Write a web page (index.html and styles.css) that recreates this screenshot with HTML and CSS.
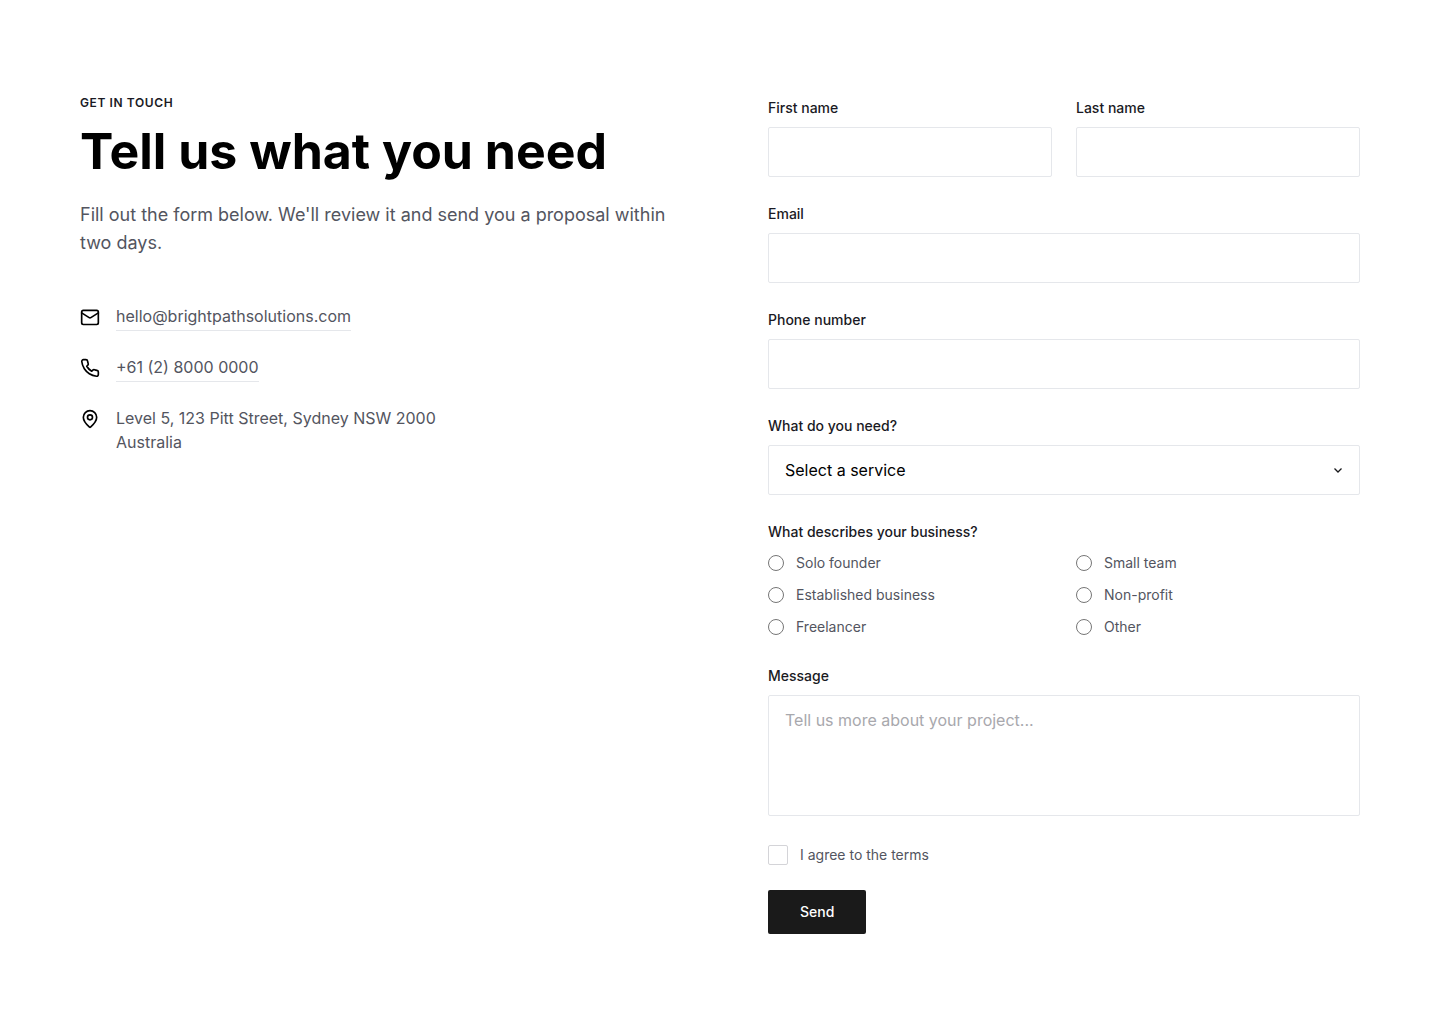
FILE: index.html
```html
<!DOCTYPE html>
<html lang="en">
<head>
    <meta charset="UTF-8">
    <meta name="viewport" content="width=device-width, initial-scale=1.0">
    <title>Contact</title>
    <link rel="stylesheet" href="styles.css">
</head>
<body>

<section class="contact">
    <div class="contact-info">
        <p class="contact-eyebrow">GET IN TOUCH</p>
        <h1 class="contact-title">Tell us what you need</h1>
        <p class="contact-lead">Fill out the form below. We'll review it and send you a proposal within two days.</p>
        <ul class="contact-list">
            <li class="contact-item">
                <svg class="contact-icon" viewBox="0 0 24 24" aria-hidden="true">
                    <rect x="2" y="4" width="20" height="17" rx="2"/>
                    <path d="m22 7-8.97 5.7a1.94 1.94 0 0 1-2.06 0L2 7"/>
                </svg>
                <a class="contact-link" href="mailto:hello@brightpathsolutions.com">hello@brightpathsolutions.com</a>
            </li>
            <li class="contact-item">
                <svg class="contact-icon" viewBox="0 0 24 24" aria-hidden="true">
                    <path d="M22 16.92v3a2 2 0 0 1-2.18 2 19.79 19.79 0 0 1-8.63-3.07 19.5 19.5 0 0 1-6-6 19.79 19.79 0 0 1-3.07-8.67A2 2 0 0 1 4.11 2h3a2 2 0 0 1 2 1.72 12.84 12.84 0 0 0 .7 2.81 2 2 0 0 1-.45 2.11L8.09 9.91a16 16 0 0 0 6 6l1.27-1.27a2 2 0 0 1 2.11-.45 12.84 12.84 0 0 0 2.81.7A2 2 0 0 1 22 16.92z"/>
                </svg>
                <a class="contact-link" href="tel:+61280000000">+61 (2) 8000 0000</a>
            </li>
            <li class="contact-item">
                <svg class="contact-icon" viewBox="0 0 24 24" aria-hidden="true">
                    <path d="M20 10c0 4.99-5.54 10.19-7.4 11.8a1 1 0 0 1-1.2 0C9.54 20.19 4 14.99 4 10a8 8 0 0 1 16 0z"/>
                    <circle cx="12" cy="10" r="3"/>
                </svg>
                <address class="contact-address">Level 5, 123 Pitt Street, Sydney NSW 2000<br>Australia</address>
            </li>
        </ul>
    </div>

    <form class="contact-form">
        <div class="form-row">
            <div class="field">
                <label class="field-label" for="first-name">First name</label>
                <input class="field-input" type="text" id="first-name" name="first-name">
            </div>
            <div class="field">
                <label class="field-label" for="last-name">Last name</label>
                <input class="field-input" type="text" id="last-name" name="last-name">
            </div>
        </div>
        <div class="field">
            <label class="field-label" for="email">Email</label>
            <input class="field-input" type="email" id="email" name="email">
        </div>
        <div class="field">
            <label class="field-label" for="phone">Phone number</label>
            <input class="field-input" type="tel" id="phone" name="phone">
        </div>
        <div class="field">
            <label class="field-label" for="service">What do you need?</label>
            <div class="select-wrap">
                <select class="field-input field-select" id="service" name="service">
                    <option value="">Select a service</option>
                </select>
                <svg class="select-arrow" viewBox="0 0 16 16" aria-hidden="true">
                    <path d="m4.5 6.5 3.5 3.5 3.5-3.5"/>
                </svg>
            </div>
        </div>
        <fieldset class="field-group">
            <legend class="field-label">What describes your business?</legend>
            <div class="radio-grid">
                <label class="radio"><input class="radio-input" type="radio" name="business" value="solo">Solo founder</label>
                <label class="radio"><input class="radio-input" type="radio" name="business" value="team">Small team</label>
                <label class="radio"><input class="radio-input" type="radio" name="business" value="established">Established business</label>
                <label class="radio"><input class="radio-input" type="radio" name="business" value="nonprofit">Non-profit</label>
                <label class="radio"><input class="radio-input" type="radio" name="business" value="freelancer">Freelancer</label>
                <label class="radio"><input class="radio-input" type="radio" name="business" value="other">Other</label>
            </div>
        </fieldset>
        <div class="field">
            <label class="field-label" for="message">Message</label>
            <textarea class="field-input field-textarea" id="message" name="message" placeholder="Tell us more about your project..."></textarea>
        </div>
        <label class="terms"><input class="terms-input" type="checkbox" name="terms">I agree to the terms</label>
        <button class="send-button" type="submit">Send</button>
    </form>
</section>

</body>
</html>
```
FILE: styles.css
```css
* {
    box-sizing: border-box;
}
body {
    margin: 0;
    font-family: Inter, "Liberation Sans", sans-serif;
    font-size: 16px;
    line-height: 24px;
    color: #535560;
    background-color: #fff;
}
.contact {
    display: grid;
    grid-template-columns: 1fr 1fr;
    gap: 96px;
    max-width: 1440px;
    padding: 96px 80px;
}
.contact-eyebrow {
    margin: 0;
    font-size: 12px;
    font-weight: 600;
    line-height: 14px;
    letter-spacing: 0.05em;
    color: #1a1a24;
}
.contact-title {
    margin: 11px 0 20px;
    font-size: 50px;
    font-weight: 700;
    line-height: 60px;
    color: #000;
}
.contact-lead {
    margin: 0;
    font-size: 18px;
    line-height: 28px;
}
.contact-list {
    display: flex;
    flex-direction: column;
    gap: 24px;
    margin: 47px 0 0;
    padding: 0;
    list-style: none;
}
.contact-item {
    display: flex;
    align-items: flex-start;
    gap: 16px;
}
.contact-icon {
    flex: none;
    width: 20px;
    height: 20px;
    margin-top: 3px;
    fill: none;
    stroke: #000;
    stroke-width: 2;
    stroke-linecap: round;
    stroke-linejoin: round;
}
.contact-link {
    padding-bottom: 2px;
    border-bottom: 1px solid #e5e7eb;
    color: inherit;
    text-decoration: none;
}
.contact-address {
    font-style: normal;
}
.contact-form {
    display: flex;
    flex-direction: column;
    gap: 25px;
}
.form-row {
    display: grid;
    grid-template-columns: 1fr 1fr;
    gap: 24px;
}
.field-label {
    display: block;
    margin-bottom: 8px;
    padding: 0;
    font-size: 14px;
    font-weight: 500;
    line-height: 23px;
    color: #1a1a24;
}
.field-input {
    display: block;
    width: 100%;
    height: 50px;
    padding: 0 16px;
    border: 1px solid #e5e7eb;
    border-radius: 2px;
    background-color: #fff;
    font: inherit;
    color: #000;
}
.select-wrap {
    position: relative;
}
.field-select {
    appearance: none;
}
.select-arrow {
    position: absolute;
    top: 17px;
    right: 14px;
    width: 16px;
    height: 16px;
    fill: none;
    stroke: #18181b;
    stroke-width: 1.3;
    pointer-events: none;
}
.field-group {
    margin: 0;
    padding: 0;
    border: none;
}
.radio-grid {
    display: grid;
    grid-template-columns: 1fr 1fr;
    gap: 8px 24px;
}
.radio {
    display: flex;
    align-items: center;
    gap: 12px;
    font-size: 14px;
}
.radio-input {
    width: 16px;
    height: 16px;
    margin: 0;
}
.field-textarea {
    height: 121px;
    padding: 12px 16px;
    resize: none;
}
.field-textarea::placeholder {
    color: #a8a8ad;
}
.terms {
    display: flex;
    align-items: center;
    align-self: flex-start;
    gap: 12px;
    margin-top: 4px;
    font-size: 14px;
    line-height: 20px;
}
.terms-input {
    appearance: none;
    width: 20px;
    height: 20px;
    margin: 0;
    border: 1px solid #d4d4d8;
    border-radius: 2px;
    background-color: #fff;
}
.terms-input:checked {
    background-color: #1a1a1a;
}
.send-button {
    align-self: flex-start;
    height: 44px;
    padding: 0 32px;
    border: none;
    border-radius: 2px;
    background-color: #1a1a1a;
    font: inherit;
    font-size: 14px;
    font-weight: 500;
    color: #fff;
    cursor: pointer;
}
@media (max-width: 768px) {
    .contact {
        grid-template-columns: 1fr;
        gap: 48px;
        padding: 48px 24px;
    }
}
```
